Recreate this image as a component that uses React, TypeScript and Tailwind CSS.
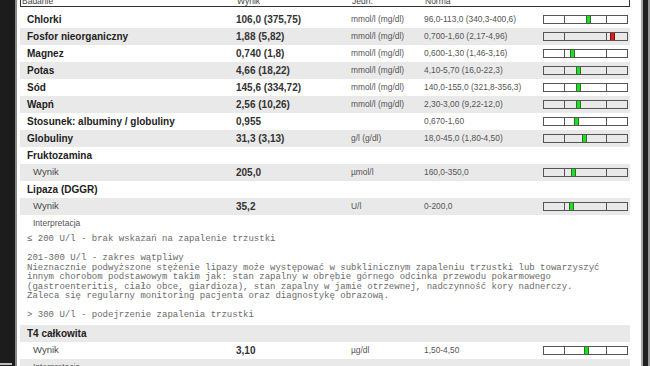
import React from 'react';

type Result = {
  name: string;
  value: string;
  unit: string;
  norm: string;
  mark: number;
  high?: boolean;
};

const results: Result[] = [
  { name: 'Chlorki', value: '106,0 (375,75)', unit: 'mmol/l (mg/dl)', norm: '96,0-113,0 (340,3-400,6)', mark: 43 },
  { name: 'Fosfor nieorganiczny', value: '1,88 (5,82)', unit: 'mmol/l (mg/dl)', norm: '0,700-1,60 (2,17-4,96)', mark: 67, high: true },
  { name: 'Magnez', value: '0,740 (1,8)', unit: 'mmol/l (mg/dl)', norm: '0,600-1,30 (1,46-3,16)', mark: 27 },
  { name: 'Potas', value: '4,66 (18,22)', unit: 'mmol/l (mg/dl)', norm: '4,10-5,70 (16,0-22,3)', mark: 33 },
  { name: 'Sód', value: '145,6 (334,72)', unit: 'mmol/l (mg/dl)', norm: '140,0-155,0 (321,8-356,3)', mark: 33 },
  { name: 'Wapń', value: '2,56 (10,26)', unit: 'mmol/l (mg/dl)', norm: '2,30-3,00 (9,22-12,0)', mark: 33 },
  { name: 'Stosunek: albuminy / globuliny', value: '0,955', unit: '', norm: '0,670-1,60', mark: 31 },
  { name: 'Globuliny', value: '31,3 (3,13)', unit: 'g/l (g/dl)', norm: '18,0-45,0 (1,80-4,50)', mark: 39 },
];

const lipazaNote = [
  '≤ 200 U/l - brak wskazań na zapalenie trzustki',
  '',
  '201-300 U/l - zakres wątpliwy',
  'Nieznacznie podwyższone stężenie lipazy może występować w subklinicznym zapaleniu trzustki lub towarzyszyć',
  'innym chorobom podstawowym takim jak: stan zapalny w obrębie górnego odcinka przewodu pokarmowego',
  '(gastroenteritis, ciało obce, giardioza), stan zapalny w jamie otrzewnej, nadczynność kory nadnerczy.',
  'Zaleca się regularny monitoring pacjenta oraz diagnostykę obrazową.',
  '',
  '> 300 U/l - podejrzenie zapalenia trzustki',
];

function RangeBar({ mark, high }: { mark: number; high?: boolean }) {
  return (
    <div className="relative flex h-[9px] w-[85px] border border-[#555]">
      <div className="w-[21px] border-r border-[#555]" />
      <div className="w-[42px] border-r border-[#555]" />
      <div className="flex-1" />
      <div
        className={`absolute top-0 bottom-0 w-[5px] border-x ${
          high ? 'bg-[#e01c1c] border-[#7a1010]' : 'bg-[#1fe01f] border-[#2f6f2f]'
        }`}
        style={{ left: mark - 1 }}
      />
    </div>
  );
}

function Row({
  gray,
  name,
  sub,
  value,
  unit,
  norm,
  mark,
  high,
}: {
  gray?: boolean;
  name: string;
  sub?: boolean;
  value?: string;
  unit?: string;
  norm?: string;
  mark?: number;
  high?: boolean;
}) {
  return (
    <div className={`flex h-[17px] items-center pl-[7px] ${gray ? 'bg-[#e9e9e9]' : ''}`}>
      <div
        className={`w-[209px] whitespace-nowrap ${
          sub ? 'pl-[6px] text-[9.5px] text-[#4a4a4a]' : 'text-[10px] font-bold text-[#222]'
        }`}
      >
        {name}
      </div>
      <div className="w-[115px] whitespace-nowrap text-[10px] font-bold text-[#333]">{value}</div>
      <div className="w-[73px] whitespace-nowrap text-[8.4px] text-[#555]">{unit}</div>
      <div className="w-[119px] whitespace-nowrap text-[8.4px] text-[#555]">{norm}</div>
      {mark !== undefined && <RangeBar mark={mark} high={high} />}
    </div>
  );
}

export default function App() {
  return (
    <div className="flex h-[366px] w-[650px] overflow-hidden bg-white font-['Liberation_Sans',Arial,sans-serif]">
      <div className="flex w-[15px] flex-col bg-[#1c1c1c]">
        <div className="flex-1" />
        <div className="mb-[1px] h-[2px] w-[12px] bg-[#bdbdbd]" />
      </div>
      <div className="w-[2px] bg-[#8a8a8a]" />

      <main className="flex-1 pl-[3px] pr-[11px]">
        <div className="-mt-[5px] flex h-[12px] items-center border border-[#333] pl-[1px] text-[8.5px] leading-none text-[#444]">
          <span className="w-[215px]">Badanie</span>
          <span className="w-[115px]">Wynik</span>
          <span className="w-[73px]">Jedn.</span>
          <span>Norma</span>
        </div>

        <div className="mt-[4px]">
          {results.map((r, i) => (
            <Row key={r.name} gray={i % 2 === 1} {...r} />
          ))}
          <Row name="Fruktozamina" />
          <Row gray sub name="Wynik" value="205,0" unit="µmol/l" norm="160,0-350,0" mark={28} />
          <Row name="Lipaza (DGGR)" />
          <Row gray sub name="Wynik" value="35,2" unit="U/l" norm="0-200,0" mark={26} />
          <div className="flex h-[17px] items-center pl-[13px] text-[8.5px] text-[#555]">Interpretacja</div>

          <pre className="pt-[3px] pb-[4.5px] pl-[7px] font-['Liberation_Mono','Courier_New',monospace] text-[9px] leading-[9.5px] text-[#6a6a6a]">
            {lipazaNote.join('\n')}
          </pre>

          <Row gray name="T4 całkowita" />
          <Row sub name="Wynik" value="3,10" unit="µg/dl" norm="1,50-4,50" mark={41} />
          <div className="flex h-[17px] items-center bg-[#e9e9e9] pl-[13px] text-[8.5px] text-[#555]">Interpretacja</div>
        </div>
      </main>

      <div className="w-[2px] bg-[#a8a8a8]" />
      <div className="w-[5px] bg-[#222]" />
      <div className="w-[2px] bg-[#9a9a9a]" />
    </div>
  );
}
